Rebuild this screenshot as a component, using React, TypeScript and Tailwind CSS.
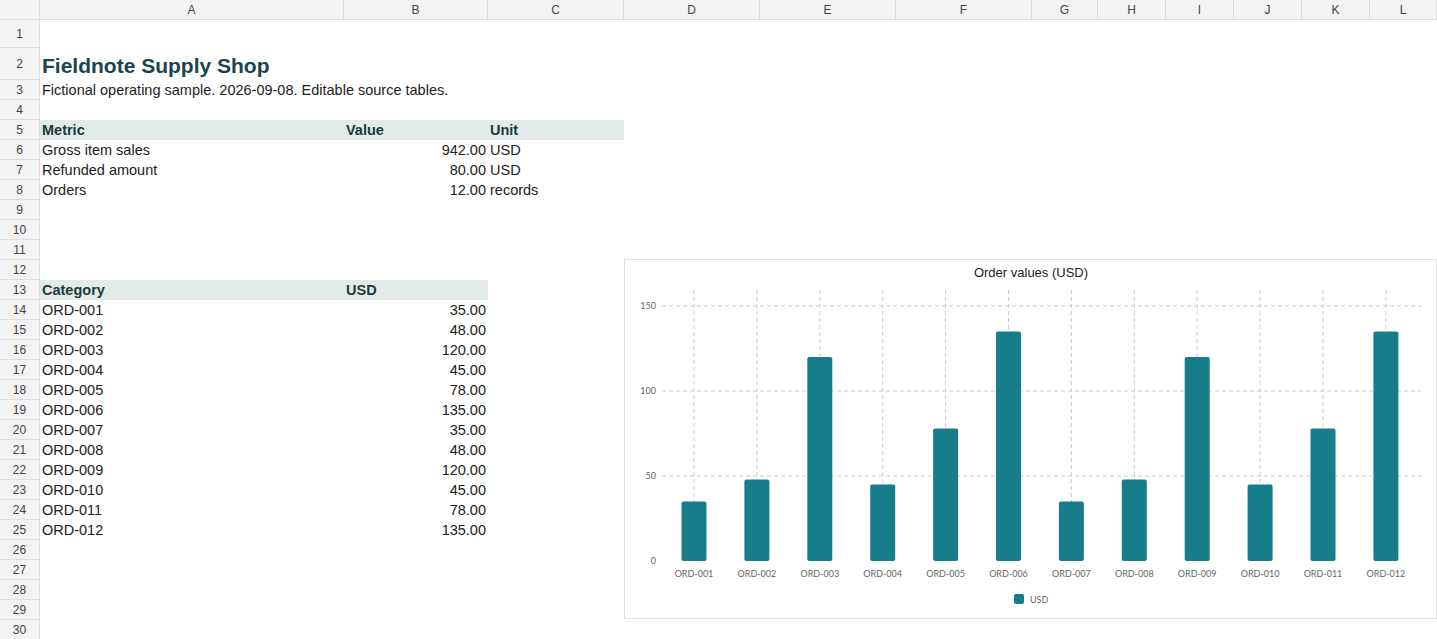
const cols = [
  { k: "A", w: 304 }, { k: "B", w: 144 }, { k: "C", w: 136 }, { k: "D", w: 136 },
  { k: "E", w: 136 }, { k: "F", w: 136 }, { k: "G", w: 66 }, { k: "H", w: 68 },
  { k: "I", w: 68 }, { k: "J", w: 68 }, { k: "K", w: 68 }, { k: "L", w: 67 },
]

const orders: [string, number][] = [
  ["ORD-001", 35], ["ORD-002", 48], ["ORD-003", 120], ["ORD-004", 45],
  ["ORD-005", 78], ["ORD-006", 135], ["ORD-007", 35], ["ORD-008", 48],
  ["ORD-009", 120], ["ORD-010", 45], ["ORD-011", 78], ["ORD-012", 135],
]

type Cell = { a?: string; b?: string; c?: string; head?: number; kind?: "title" | "sub"; h?: number }
const rows: Cell[] = [
  { h: 28 }, { a: "Fieldnote Supply Shop", kind: "title", h: 32 }, { a: "Fictional operating sample. 2026-09-08. Editable source tables.", kind: "sub" }, {},
  { a: "Metric", b: "Value", c: "Unit", head: 3 },
  { a: "Gross item sales", b: "942.00", c: "USD" },
  { a: "Refunded amount", b: "80.00", c: "USD" },
  { a: "Orders", b: "12.00", c: "records" },
  {}, {}, {}, {},
  { a: "Category", b: "USD", head: 2 },
  ...orders.map(([n, v]) => ({ a: n, b: v.toFixed(2) })),
  {}, {}, {}, {}, {},
]

function Chart() {
  const y0 = 560, k = 1.7
  const x0 = 693, dx = 62.9
  return (
    <div className="absolute left-[624px] top-[259px] w-[813px] h-[360px] bg-white border border-[#e2e2e2]">
      <svg width="813" height="360" viewBox="624 259 813 360" style={{ fontFamily: "Lato, sans-serif" }}>
        <text x="1030" y="276" textAnchor="middle" fontSize="13" fill="#222" fontFamily="Liberation Sans, Arial, sans-serif">Order values (USD)</text>
        {[50, 100, 150].map(v => (
          <g key={v}>
            <line x1="661" x2="1420" y1={y0 - v * k} y2={y0 - v * k} stroke="#ccc" strokeDasharray="4 3" />
            <text x="655" y={y0 - v * k + 3} textAnchor="end" fontSize="9" fill="#666">{v}</text>
          </g>
        ))}
        <text x="655" y={y0 + 3} textAnchor="end" fontSize="9" fill="#666">0</text>
        {orders.map(([n, v], i) => {
          const cx = x0 + i * dx
          return (
            <g key={n}>
              <line x1={cx} x2={cx} y1="289" y2={y0} stroke="#ccc" strokeDasharray="4 3" />
              <rect x={cx - 12.5} y={y0 - v * k} width="25" height={v * k} rx="2" fill="#177d8a" />
              <text x={cx} y="576" textAnchor="middle" fontSize="9" fill="#666">{n}</text>
            </g>
          )
        })}
        <rect x="1013" y="593" width="10" height="10" rx="2" fill="#177d8a" />
        <text x="1029" y="601.5" fontSize="9" fill="#666">USD</text>
      </svg>
    </div>
  )
}

export default function App() {
  return (
    <div className="relative w-[1437px] h-[639px] overflow-hidden bg-white text-[#222] text-[14.5px]" style={{ fontFamily: "'Liberation Sans', Arial, sans-serif" }}>
      <div className="flex h-[20px] bg-[#f3f3f3] border-b border-[#dcdcdc]">
        <div className="w-[40px] shrink-0 border-r border-[#dcdcdc]" />
        {cols.map(c => (
          <div key={c.k} style={{ width: c.w }} className="shrink-0 border-r border-[#dcdcdc] text-[12px] text-[#444] flex items-center justify-center">{c.k}</div>
        ))}
      </div>
      {rows.map((r, i) => (
        <div key={i} className="flex" style={{ height: r.h ?? 20 }}>
          <div className="w-[40px] shrink-0 bg-[#f3f3f3] border-r border-b border-[#dcdcdc] text-[12px] text-[#444] flex items-center justify-center">{i + 1}</div>
          {r.kind === "title" ? (
            <div className="pl-[2px] text-[21px] font-bold text-[#1a4350] whitespace-nowrap self-end leading-[24px] pb-[2px]">{r.a}</div>
          ) : r.kind === "sub" ? (
            <div className="pl-[2px] whitespace-nowrap leading-[20px]">{r.a}</div>
          ) : (
            <>
              <div className={`w-[304px] shrink-0 pl-[2px] leading-[20px] ${r.head ? "bg-[#e2ebe8] font-bold text-[#1a3a40]" : ""}`}>{r.a}</div>
              <div className={`w-[144px] shrink-0 px-[2px] leading-[20px] ${r.head ? "bg-[#e2ebe8] font-bold text-[#1a3a40] text-left" : "text-right"}`}>{r.b}</div>
              <div className={`w-[136px] shrink-0 pl-[2px] leading-[20px] ${r.head === 3 ? "bg-[#e2ebe8] font-bold text-[#1a3a40]" : ""}`}>{r.c}</div>
            </>
          )}
        </div>
      ))}
      <Chart />
    </div>
  )
}
